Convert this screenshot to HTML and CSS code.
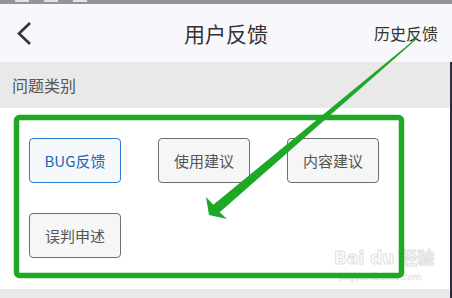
FILE: index.html
```html
<!DOCTYPE html>
<html lang="zh">
<head>
    <meta charset="UTF-8">
    <meta name="viewport" content="width=device-width, initial-scale=1.0">
    <title>用户反馈</title>
    <link rel="stylesheet" href="styles.css">
</head>
<body>
    <div class="page">
        <div class="status-bar">
            <span class="dot"></span><span class="dot"></span><span class="dot"></span>
        </div>

        <div class="nav-bar">
            <span class="back">
                <svg width="16" height="26" viewBox="0 0 16 26">
                    <path d="M13 2 L2 12.5 L13 23" fill="none" stroke="#333" stroke-width="2.6"/>
                </svg>
            </span>
            <h1 class="nav-title">用户反馈</h1>
            <span class="nav-link">历史反馈</span>
        </div>

        <div class="body-area">
            <div class="section-title">问题类别</div>

            <div class="category-list">
                <button class="category-btn active">BUG反馈</button>
                <button class="category-btn">使用建议</button>
                <button class="category-btn">内容建议</button>
                <button class="category-btn">误判申述</button>
            </div>

            <div class="bottom-gap"></div>
        </div>

        <!-- watermark -->
        <div class="watermark">
            <div class="wm-logo">Bai du 经验</div>
            <div class="wm-url">jingyan.baidu.com</div>
        </div>

        <!-- annotation: green box + arrow -->
        <svg class="annotation" width="452" height="298" viewBox="0 0 452 298">
            <rect x="16.5" y="117.5" width="385" height="158" rx="3" fill="none" stroke="#1ea826" stroke-width="5.5"/>
            <polygon fill="#1ea826" points="418,38 219.7,212.3 227,219 209,215 206,197 213.3,204.7 417,37.4"/>
        </svg>
    </div>
</body>
</html>
```

FILE: styles.css
```css
body {
    margin: 0;
    font-family: "Noto Sans CJK SC", "Noto Sans", sans-serif;
    background: #ffffff;
}
.page {
    position: relative;
    width: 452px;
    height: 298px;
    overflow: hidden;
    display: flex;
    flex-direction: column;
}
.status-bar {
    height: 4px;
    background: #959595;
    display: flex;
    gap: 15px;
    padding-left: 15px;
}
.status-bar .dot {
    width: 14px;
    height: 2px;
    background: #e2e2e2;
}
.nav-bar {
    height: 58px;
    background: #f8f8fc;
    display: grid;
    grid-template-columns: 1fr auto 1fr;
    align-items: center;
}
.back {
    width: 16px;
    height: 26px;
    margin-left: 17px;
    margin-top: 2px;
    justify-self: start;
}
.nav-title {
    margin: 0;
    font-size: 21px;
    font-weight: normal;
    color: #333;
}
.nav-link {
    justify-self: end;
    font-size: 16px;
    color: #333;
    margin-right: 14px;
    margin-top: -1px;
}
.body-area {
    flex: 1;
    display: flex;
    flex-direction: column;
    border-right: 2px solid #2e2e38;
}
.section-title {
    height: 46px;
    background: #e9e9e9;
    padding-left: 12px;
    display: flex;
    align-items: center;
    font-size: 16px;
    color: #555;
}
.category-list {
    flex: 1;
    display: grid;
    grid-template-columns: repeat(3, 92px);
    grid-auto-rows: 45px;
    column-gap: 37px;
    row-gap: 30px;
    padding: 30px 0 0 29px;
    align-content: start;
}
.category-btn {
    font-family: inherit;
    font-size: 15px;
    color: #555;
    background: #f6f6f6;
    border: 1px solid #6e6e6e;
    border-radius: 4px;
    padding: 0;
}
.category-btn.active {
    color: #1a66b3;
    background: #f6f8fb;
    border-color: #2a7bd0;
}
.bottom-gap {
    height: 9px;
    background: #e9e9e9;
}
.watermark {
    position: absolute;
    left: 334px;
    top: 246px;
    width: 92px;
    text-align: center;
    white-space: nowrap;
    color: #ffffff;
    -webkit-text-stroke: 1px #e0e0e0;
}
.wm-logo {
    font-family: "DejaVu Sans", "Noto Sans CJK SC", sans-serif;
    font-size: 17px;
    font-weight: bold;
    line-height: 24px;
}
.wm-url {
    font-family: "DejaVu Sans", sans-serif;
    font-size: 9px;
    line-height: 14px;
    -webkit-text-stroke: 0.5px #e0e0e0;
}
.annotation {
    position: absolute;
    left: 0;
    top: 0;
}
```
